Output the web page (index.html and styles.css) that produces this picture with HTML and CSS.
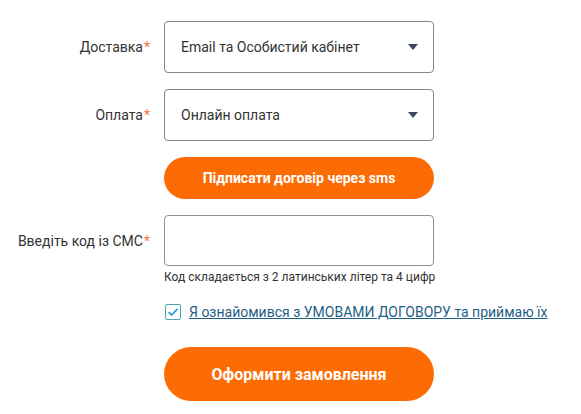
FILE: index.html
```html
<!DOCTYPE html>
<html lang="uk">
<head>
    <meta charset="UTF-8">
    <title>Оформлення замовлення</title>
    <link rel="stylesheet" href="styles.css">
</head>
<body>
<form class="order_form">
    <div class="form_row">
        <label class="form_label">Доставка<span class="req">*</span></label>
        <div class="form_control">
            <div class="select_box">
                <span>Email та Особистий кабінет</span>
                <span class="select_arrow"></span>
            </div>
        </div>
    </div>

    <div class="form_row">
        <label class="form_label">Оплата<span class="req">*</span></label>
        <div class="form_control">
            <div class="select_box">
                <span>Онлайн оплата</span>
                <span class="select_arrow"></span>
            </div>
        </div>
    </div>

    <div class="form_row">
        <div class="form_label"></div>
        <div class="form_control">
            <button type="button" class="btn btn_sms">Підписати договір через sms</button>
        </div>
    </div>

    <div class="form_row row_code">
        <label class="form_label">Введіть код із СМС<span class="req">*</span></label>
        <div class="form_control">
            <input type="text" class="text_input">
        </div>
    </div>
    <div class="form_row">
        <div class="form_label"></div>
        <div class="hint">Код складається з 2 латинських літер та 4 цифр</div>
    </div>

    <div class="form_row row_agree">
        <div class="form_label"></div>
        <label class="agree">
            <span class="check_box">
                <svg width="12" height="10" viewBox="0 0 12 10"><path d="M1.5 5.2 L4.6 8 L10.5 1.8" fill="none" stroke="#2a9fd8" stroke-width="1.8"/></svg>
            </span>
            <a href="#" class="agree_link">Я ознайомився з УМОВАМИ ДОГОВОРУ та приймаю їх</a>
        </label>
    </div>

    <div class="form_row">
        <div class="form_label"></div>
        <div class="form_control">
            <button type="button" class="btn btn_order">Оформити замовлення</button>
        </div>
    </div>
</form>
</body>
</html>
```

FILE: styles.css
```css
body{
    margin: 0;
    background: #ffffff;
    font-family: Roboto, "Liberation Sans", sans-serif;
    color: #333333;
}

.order_form{
    padding-top: 21px;
}

.form_row{
    display: flex;
    align-items: center;
    margin-bottom: 16px;
}

.form_label{
    width: 150px;
    flex: none;
    padding-right: 14px;
    text-align: right;
    font-size: 14px;
    color: #333333;
}

.req{
    color: #f4733d;
    margin-left: 1px;
}

.form_control{
    width: 270px;
}

.select_box{
    box-sizing: border-box;
    height: 52px;
    border: 1px solid #7c8590;
    border-radius: 4px;
    padding: 0 15px 0 16px;
    display: flex;
    align-items: center;
    justify-content: space-between;
    font-size: 14px;
    color: #333333;
}

.select_arrow{
    width: 0;
    height: 0;
    border-left: 5px solid transparent;
    border-right: 5px solid transparent;
    border-top: 6px solid #3b4656;
}

.btn{
    display: block;
    width: 270px;
    border: none;
    border-radius: 30px;
    background-color: #fd6b03;
    color: #ffffff;
    font-family: Roboto, "Liberation Sans", sans-serif;
    font-weight: bold;
    text-align: center;
}

.btn_sms{
    height: 42px;
    font-size: 14px;
}

.btn_order{
    height: 54px;
    font-size: 16px;
}

.text_input{
    display: block;
    box-sizing: border-box;
    width: 270px;
    height: 51px;
    border: 1px solid #8a929c;
    border-radius: 4px;
}

.row_code{
    margin-bottom: 4px;
}

.hint{
    font-size: 12px;
    color: #333333;
}

.row_agree{
    margin-top: 20px;
    margin-bottom: 27px;
}

.agree{
    display: flex;
    align-items: center;
    white-space: nowrap;
}

.check_box{
    box-sizing: border-box;
    width: 16px;
    height: 16px;
    border: 1px solid #4aa6a8;
    border-radius: 2px;
    margin-left: 1px;
    margin-right: 8px;
    display: flex;
    align-items: center;
    justify-content: center;
}

.agree_link{
    font-size: 14px;
    color: #1f5f85;
    text-decoration: underline;
}
```
